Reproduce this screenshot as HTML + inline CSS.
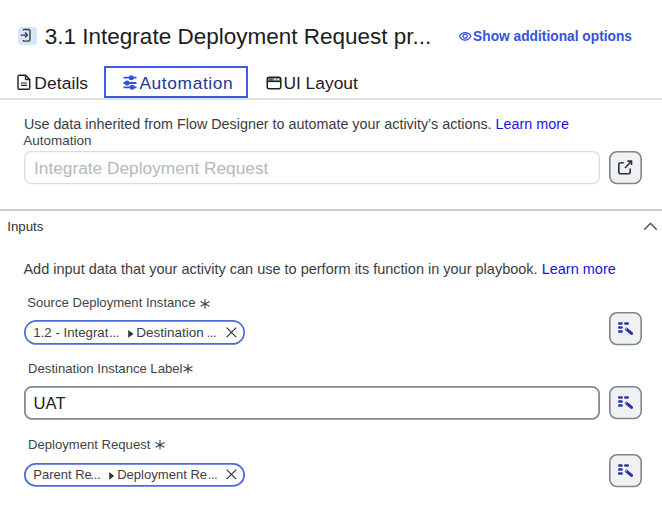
<!DOCTYPE html>
<html><head><meta charset="utf-8">
<style>
*{margin:0;padding:0;box-sizing:border-box}
html,body{width:662px;height:515px;overflow:hidden;background:#fff;font-family:"Liberation Sans",sans-serif;color:#2e3338}
.a{position:absolute;white-space:nowrap}
svg{position:absolute;overflow:visible}
.ticon{position:absolute;left:18px;top:27px;width:18.5px;height:18px;background:#d6e6fb;border-radius:4px}
.title{left:44.8px;top:23.6px;font-size:22.5px;color:#1b1d1f;line-height:26px}
.show{left:473.1px;top:29.2px;font-size:13.75px;font-weight:bold;color:#3553de;line-height:16px}
.tab{top:73.2px;font-size:17.4px;line-height:20px;color:#1d2024}
.tabbox{position:absolute;left:104px;top:66px;width:144.4px;height:32px;border:2px solid #3f5de2}
.div1{position:absolute;left:0;top:98px;width:662px;height:1.6px;background:#dde1e3}
.p{line-height:17px;color:#383e43}
.link{color:#1414e0}
.lbl{font-size:13.1px;line-height:15px;color:#3d4449}
.inp{position:absolute;left:24px;width:576px;border-radius:7px}
.btn{position:absolute;left:609px;width:33px;height:33.3px;border:1.6px solid #78838b;border-radius:7px;background:#eff1f2}
.btn svg{left:-1.6px;top:-1.6px}
.div2{position:absolute;left:0;top:209px;width:662px;height:2px;background:#c9ced2}
.chip{position:absolute;left:24px;width:221px;border:1.6px solid #5870d8;border-radius:13px}
.ct{font-size:13px;line-height:15px;color:#3a4045}
.dots{font-size:13px;line-height:15px;color:#3a4045;letter-spacing:-0.45px}
</style></head><body>
<div class="ticon"><svg width="18" height="18" viewBox="0 0 18 18" style="left:0;top:0"><path d="M5.3 3.6v-0.5a0.6 0.6 0 0 1 0.6-0.6h4.6a1.5 1.5 0 0 1 1.5 1.5v8.6a1.5 1.5 0 0 1-1.5 1.5h-4.6a0.6 0.6 0 0 1-0.6-0.6v-0.5" fill="none" stroke="#3a4046" stroke-width="1.4"/><path d="M2.8 8.1h6.6M7 5.6l2.5 2.5-2.5 2.5" fill="none" stroke="#3a4046" stroke-width="1.4"/></svg></div>
<div class="a title">3.1 Integrate Deployment Request pr...</div>
<svg width="13" height="9" viewBox="0 0 13 9" style="left:459px;top:32.4px"><path d="M0.6 4.3C2.6 -0.7 9.8 -0.7 11.8 4.3C9.8 9.3 2.6 9.3 0.6 4.3Z" fill="none" stroke="#3553de" stroke-width="1.25"/><circle cx="6.1" cy="4.3" r="2.1" fill="none" stroke="#3553de" stroke-width="1.25"/></svg>
<div class="a show">Show additional options</div>

<svg width="14" height="16" viewBox="0 0 14 16" style="left:17.4px;top:74px"><path d="M2.3 1.2h6.2l4.2 4.2v8.6a1.3 1.3 0 0 1-1.3 1.3h-9.1a1.3 1.3 0 0 1-1.3-1.3v-11.5a1.3 1.3 0 0 1 1.3-1.3z" fill="none" stroke="#1d2024" stroke-width="1.4"/><path d="M8.5 1.5v3.2a0.8 0.8 0 0 0 0.8 0.8h3.2" fill="none" stroke="#1d2024" stroke-width="1.4"/><path d="M4 9h6M4 11.4h6" stroke="#1d2024" stroke-width="1.2"/></svg>
<div class="a tab" style="left:34.3px;letter-spacing:0.1px">Details</div>
<div class="tabbox"></div>
<svg width="14" height="14" viewBox="0 0 14 14" style="left:122.5px;top:75px"><path d="M0.5 2.7h13M0.5 8h13M0.5 12.3h13" stroke="#3352e0" stroke-width="1.8"/><circle cx="8.3" cy="2.7" r="2.5" fill="#3352e0"/><circle cx="4.1" cy="8" r="2.5" fill="#3352e0"/><circle cx="9.2" cy="12.3" r="2.5" fill="#3352e0"/></svg>
<div class="a tab" style="left:139.4px;color:#27369b;letter-spacing:0.6px">Automation</div>
<svg width="16" height="14" viewBox="0 0 16 14" style="left:265.5px;top:75.5px"><rect x="2" y="2" width="12" height="3.2" fill="#8c9297"/><rect x="3.3" y="2.6" width="3.4" height="2" fill="#555b60"/><circle cx="9" cy="3.6" r="0.8" fill="#fff"/><circle cx="12" cy="3.6" r="0.8" fill="#fff"/><rect x="1.2" y="1.2" width="13.6" height="11.6" rx="2" fill="none" stroke="#1d2024" stroke-width="1.5"/><path d="M1.2 5.4h13.6" stroke="#1d2024" stroke-width="1.4"/></svg>
<div class="a tab" style="left:283.4px">UI Layout</div>
<div class="div1"></div>

<div class="a p" style="left:23.9px;top:115.9px;font-size:14.35px">Use data inherited from Flow Designer to automate your activity’s actions. <span class="link">Learn more</span></div>
<div class="a lbl" style="left:23.3px;top:132.6px;font-size:13.5px;line-height:16px">Automation</div>
<svg width="576" height="33.2" style="left:24px;top:151.2px"><rect x="0.65" y="0.65" width="574.7" height="31.9" rx="6.5" fill="none" stroke="#d9dde0" stroke-width="1.3"/></svg>
<div class="a" style="left:34px;top:157.8px;font-size:17.3px;line-height:20px;color:#b5b9bd">Integrate Deployment Request</div>
<svg width="33" height="33.3" viewBox="0 0 33 33.3" style="left:609px;top:151.2px"><rect x="0.8" y="0.8" width="31.4" height="31.7" rx="7.2" fill="#eff1f2" stroke="#7c868d" stroke-width="1.6"/><path d="M14.8 11.8h-3a2 2 0 0 0-2 2v7a2 2 0 0 0 2 2h7.4a2 2 0 0 0 2-2v-3.2" fill="none" stroke="#2e3338" stroke-width="1.6"/><path d="M16 17L22.5 10.3M18.4 10.1h4.1v4" fill="none" stroke="#2e3338" stroke-width="1.6"/></svg>
<div class="div2"></div>

<div class="a lbl" style="left:7.2px;top:218.7px;font-size:13.3px;line-height:16px;color:#2e3338">Inputs</div>
<svg width="16" height="10" viewBox="0 0 16 10" style="left:643px;top:221px"><path d="M1.3 8.8L7.5 2.3 13.7 8.8" fill="none" stroke="#4a555e" stroke-width="1.5"/></svg>

<div class="a p" style="left:23.4px;top:260.6px;font-size:14.5px">Add input data that your activity can use to perform its function in your playbook. <span class="link">Learn more</span></div>

<div class="a lbl" style="left:27.3px;top:294.8px">Source Deployment Instance</div>
<svg width="10" height="10" viewBox="0 0 10 10" style="left:199.8px;top:299.2px"><path d="M5 0v9.6M0.5 2.4l9 4.8M0.5 7.2l9-4.8" stroke="#3d4449" stroke-width="1.15"/></svg>
<svg width="221" height="24.8" style="left:24.2px;top:320.1px"><rect x="0.85" y="0.85" width="219.3" height="23.1" rx="11.55" fill="none" stroke="#4d69e0" stroke-width="1.7"/></svg>
<div class="a ct" style="left:33.3px;top:324.7px;font-size:13.25px">1.2 - Integrat</div>
<div class="a dots" style="left:109.2px;top:324.7px">...</div>
<svg width="6" height="8" viewBox="0 0 6 8" style="left:127.6px;top:329.6px"><path d="M0.2 0L5.5 3.9 0.2 7.8Z" fill="#2e3338"/></svg>
<div class="a ct" style="left:136.3px;top:324.7px;font-size:13.5px">Destination</div>
<div class="a dots" style="left:206.7px;top:324.7px">...</div>
<svg width="11" height="11" viewBox="0 0 11 11" style="left:226px;top:326.7px"><path d="M0.6 0.6L10.2 10.2M10.2 0.6L0.6 10.2" stroke="#2e3338" stroke-width="1.2"/></svg>
<svg width="33" height="33.3" viewBox="0 0 33 33.3" style="left:609px;top:311.8px"><rect x="0.8" y="0.8" width="31.4" height="31.7" rx="7.2" fill="#eff1f2" stroke="#7c868d" stroke-width="1.6"/><use href="#wand"/></svg>

<div class="a lbl" style="left:28.1px;top:360.7px">Destination Instance Label</div>
<svg width="10" height="10" viewBox="0 0 10 10" style="left:183.4px;top:363.8px"><path d="M5 0v9.6M0.5 2.4l9 4.8M0.5 7.2l9-4.8" stroke="#3d4449" stroke-width="1.15"/></svg>
<svg width="576" height="33.8" style="left:24px;top:385.9px"><rect x="0.9" y="0.9" width="574.2" height="32" rx="7" fill="none" stroke="#818b92" stroke-width="1.8"/></svg>
<div class="a" style="left:33.6px;top:394px;font-size:16.6px;line-height:19px;color:#1d2024">UAT</div>
<svg width="33" height="33.3" viewBox="0 0 33 33.3" style="left:609px;top:386.3px"><rect x="0.8" y="0.8" width="31.4" height="31.7" rx="7.2" fill="#eff1f2" stroke="#7c868d" stroke-width="1.6"/><use href="#wand"/></svg>

<div class="a lbl" style="left:28.1px;top:436.8px">Deployment Request</div>
<svg width="10" height="10" viewBox="0 0 10 10" style="left:155px;top:440.2px"><path d="M5 0v9.6M0.5 2.4l9 4.8M0.5 7.2l9-4.8" stroke="#3d4449" stroke-width="1.15"/></svg>
<svg width="221" height="23.8" style="left:24.2px;top:463.2px"><rect x="0.85" y="0.85" width="219.3" height="22.1" rx="11.05" fill="none" stroke="#4d69e0" stroke-width="1.7"/></svg>
<div class="a ct" style="left:33.3px;top:467.3px">Parent Re</div>
<div class="a dots" style="left:90.6px;top:467.3px">...</div>
<svg width="6" height="8" viewBox="0 0 6 8" style="left:108.5px;top:471.6px"><path d="M0.2 0L5.2 3.9 0.2 7.8Z" fill="#2e3338"/></svg>
<div class="a ct" style="left:117.2px;top:467.3px;font-size:13.05px">Deployment Re</div>
<div class="a dots" style="left:207.8px;top:467.3px">...</div>
<svg width="11" height="11" viewBox="0 0 11 11" style="left:226px;top:469px"><path d="M0.6 0.6L10.2 10.2M10.2 0.6L0.6 10.2" stroke="#2e3338" stroke-width="1.2"/></svg>
<svg width="33" height="33.3" viewBox="0 0 33 33.3" style="left:609px;top:454.4px"><rect x="0.8" y="0.8" width="31.4" height="31.7" rx="7.2" fill="#eff1f2" stroke="#7c868d" stroke-width="1.6"/><use href="#wand"/></svg>

<svg width="0" height="0" style="left:0;top:0"><defs><g id="wand"><path d="M10.2 11.6h2.4M10.2 15.6h2.4M10.2 19.5h2.4M16.3 11.6h2.4" stroke="#2335a6" stroke-width="2.5" stroke-linecap="round"/><path d="M17.4 17.1L22.5 21.4" stroke="#2335a6" stroke-width="3.1" stroke-linecap="round"/><circle cx="17.1" cy="16.8" r="0.7" fill="#e6e9ff"/></g></defs></svg>
</body></html>
